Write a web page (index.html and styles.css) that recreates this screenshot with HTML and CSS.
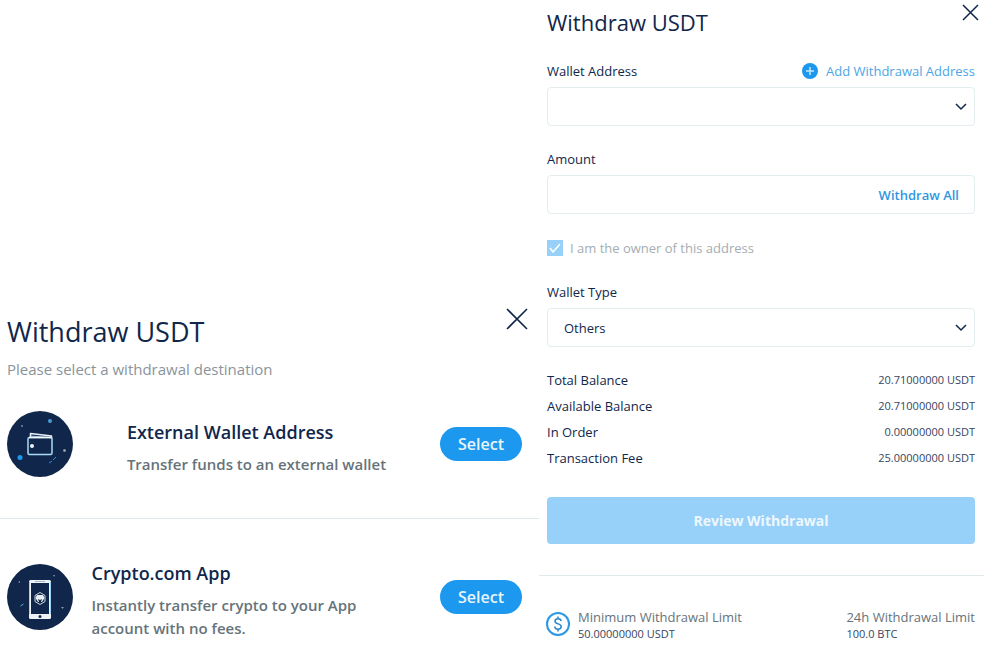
FILE: index.html
```html
<!DOCTYPE html>
<html lang="en">
<head>
<meta charset="utf-8">
<title>Withdraw USDT</title>
<link rel="stylesheet" href="styles.css">
</head>
<body>
<main class="layout">
  <section class="destinations">
    <header class="dest-header">
      <div>
        <h1 class="dest-title">Withdraw USDT</h1>
        <p class="dest-subtitle">Please select a withdrawal destination</p>
      </div>
      <button class="close" type="button" aria-label="Close">
        <svg width="22" height="22" viewBox="0 0 22 22"><path d="M1 1 21 21M21 1 1 21" fill="none" stroke="#10274b" stroke-width="1.600"/></svg>
      </button>
    </header>

    <article class="option">
      <svg class="option-icon" viewBox="0 0 66 66" aria-hidden="true">
        <circle cx="33" cy="33" r="33" fill="#10274b"/>
        <g fill="none" stroke-linejoin="round">
          <path d="M23.500 26v-3.500L44.500 25v3" stroke="#e8f2f8" stroke-width="1.500"/>
          <path d="M24 25 43 26.500" stroke="#9fb6c9"/>
          <rect x="21" y="26.500" width="24" height="17" rx="1.500" stroke="#a9daf8" stroke-width="1.500"/>
          <path d="M22 26.500h22" stroke="#f4f8fa" stroke-width="1.500"/>
          <path d="m42 52 3-2m1-1 3-3" stroke="#1c98ee"/>
        </g>
        <circle cx="25" cy="35" r="2" fill="#eef3f5"/>
        <circle cx="43" cy="10" r="2" fill="#4c9bd9"/>
        <circle cx="13" cy="46.500" r="2.500" fill="#1c98ee"/>
        <circle cx="15" cy="15" r="1" fill="#7f8da0"/>
        <circle cx="57.500" cy="39.500" r="1.300" fill="#aab7c2"/>
      </svg>
      <div class="option-text">
        <h2>External Wallet Address</h2>
        <p>Transfer funds to an external wallet</p>
      </div>
      <button class="select-button" type="button">Select</button>
    </article>

    <article class="option">
      <svg class="option-icon" viewBox="0 0 66 66" aria-hidden="true">
        <circle cx="33" cy="33" r="33" fill="#10274b"/>
        <rect x="22" y="16" width="22" height="39" rx="1.500" fill="#eef4f6"/>
        <path d="M22.500 18v32M43.500 18v32" stroke="#9bd2f8" fill="none"/>
        <rect x="24" y="19" width="18" height="31" fill="#10274b"/>
        <path d="M28 17.500h10" stroke="#a9b6c0"/>
        <circle cx="33" cy="52.500" r="1.500" fill="#10274b"/>
        <path d="m33 28.500 5 3v6l-5 3-5-3v-6z" fill="none" stroke="#cfd9df"/>
        <path d="M30 31h6l1.500 3-2.500 4h-4l-2.500-4z" fill="#e9eff2"/>
        <path d="m31 35 2 1 2-1-1 3h-2z" fill="#10274b"/>
        <path d="m13.500 42 3-2" stroke="#4eaff2"/>
        <path d="m11 18 2-1v2zM46 11h2l-1 2zM54 43h3l-1.500 2z" fill="#8795a6"/>
      </svg>
      <div class="option-text option-text-long">
        <h2>Crypto.com App</h2>
        <p>Instantly transfer crypto to your App account with no fees.</p>
      </div>
      <button class="select-button" type="button">Select</button>
    </article>
  </section>

  <section class="withdraw">
    <form class="form">
      <header class="form-header">
        <h1 class="form-title">Withdraw USDT</h1>
        <button class="close" type="button" aria-label="Close">
          <svg width="17" height="17" viewBox="0 0 17 17"><path d="m1 1 15 15M16 1 1 16" fill="none" stroke="#10274b" stroke-width="1.500"/></svg>
        </button>
      </header>

      <div class="field">
        <div class="label-row">
          <label for="address">Wallet Address</label>
          <a class="add-link" href="#">
            <svg width="16" height="16" viewBox="0 0 16 16" aria-hidden="true"><circle cx="8" cy="8" r="8" fill="#1c98ee"/><path d="M8 4v8M4 8h8" stroke="#c9e6fb" stroke-width="1.500"/></svg>
            Add Withdrawal Address
          </a>
        </div>
        <div class="control">
          <select id="address"><option></option></select>
          <svg class="chevron" viewBox="0 0 12 8" aria-hidden="true"><path d="m1 1 5 5 5-5" fill="none" stroke="#10274b" stroke-width="1.500"/></svg>
        </div>
      </div>

      <div class="field">
        <label for="amount">Amount</label>
        <div class="control">
          <input id="amount" class="amount" type="text">
          <button class="all-button" type="button">Withdraw All</button>
        </div>
      </div>

      <label class="owner">
        <span class="tick">
          <input type="checkbox" checked disabled>
          <svg viewBox="0 0 16 16" aria-hidden="true"><path d="m3 8 3 4 7-8" fill="none" stroke="#fff" stroke-width="1.500"/></svg>
        </span>
        I am the owner of this address
      </label>

      <div class="field">
        <label for="type">Wallet Type</label>
        <div class="control">
          <select id="type"><option>Others</option></select>
          <svg class="chevron" viewBox="0 0 12 8" aria-hidden="true"><path d="m1 1 5 5 5-5" fill="none" stroke="#10274b" stroke-width="1.500"/></svg>
        </div>
      </div>

      <table class="balances">
        <tr><th scope="row">Total Balance</th><td>20.71000000 USDT</td></tr>
        <tr><th scope="row">Available Balance</th><td>20.71000000 USDT</td></tr>
        <tr><th scope="row">In Order</th><td>0.00000000 USDT</td></tr>
        <tr><th scope="row">Transaction Fee</th><td>25.00000000 USDT</td></tr>
      </table>

      <button class="review" type="submit" disabled>Review Withdrawal</button>
    </form>

    <footer class="limits">
      <svg class="limit-icon" viewBox="0 0 24 24" aria-hidden="true">
        <circle cx="12" cy="12" r="11" fill="none" stroke="#2b98e6" stroke-width="2"/>
        <path d="M15 9c0-1.500-1.200-2.300-3-2.300S9 7.500 9 9.200c0 3.600 6.200 1.800 6.200 5.400 0 1.700-1.400 2.600-3.200 2.600s-3.200-.9-3.200-2.600M12 4.500v2.500M12 17v2.500" fill="none" stroke="#2587cf" stroke-width="1.500"/>
      </svg>
      <div>
        <p class="limit-label">Minimum Withdrawal Limit</p>
        <p class="limit-value">50.00000000 USDT</p>
      </div>
      <div class="limit-end">
        <p class="limit-label">24h Withdrawal Limit</p>
        <p class="limit-value">100.0 BTC</p>
      </div>
    </footer>
  </section>
</main>
</body>
</html>
```
FILE: styles.css
```css
* {
  box-sizing: border-box;
}

body {
  margin: 0;
  background: #fff;
  color: #10274b;
  font-family: "Open Sans", "Noto Sans", sans-serif;
  font-size: 13px;
  line-height: 20px;
}

h1, h2, p {
  margin: 0;
}

button, input, select {
  font: inherit;
  color: inherit;
}

button {
  border: 0;
  padding: 0;
  background: none;
}

svg {
  display: block;
}

.layout {
  display: grid;
  grid-template-columns: 539fr 451fr;
  min-height: 100vh;
}

/* Destination list */
.destinations {
  display: flex;
  flex-direction: column;
  justify-content: flex-end;
}

.dest-header {
  display: flex;
  justify-content: space-between;
  align-items: flex-start;
  padding: 0 11px 0 7px;
}

.dest-header .close {
  margin-top: -6px;
}

.dest-title {
  font-size: 27px;
  line-height: 36px;
  font-weight: 400;
}

.dest-subtitle {
  margin-top: 7px;
  color: #8a949b;
  font-size: 15px;
  line-height: 24px;
}

.option {
  display: flex;
  align-items: center;
  padding: 30px 17px 41px 7px;
}

.option + .option {
  border-top: 1px solid #dfeaec;
  padding-top: 34px;
  padding-bottom: 10px;
}

.option-icon {
  flex: none;
  width: 66px;
  height: 66px;
}

.option-text {
  max-width: 330px;
  margin: 0 auto;
  padding-top: 8px;
  font-weight: 600;
}

.option-text-long {
  padding-right: 24px;
}

.option-text h2 {
  margin-bottom: 9px;
  font-size: 18px;
  line-height: 24px;
  font-weight: 600;
}

.option-text p {
  color: #67737a;
  font-size: 15px;
  line-height: 23px;
}

.select-button {
  flex: none;
  width: 82px;
  height: 34px;
  border-radius: 17px;
  background: #1c98ee;
  color: #e9f5fd;
  font-size: 16px;
  font-weight: 600;
}

/* Withdrawal form */
.withdraw {
  padding-top: 7px;
}

.form {
  display: flex;
  flex-direction: column;
  gap: 23px;
  padding: 0 15px 31px 8px;
}

.form-header {
  display: flex;
  justify-content: space-between;
  align-items: flex-start;
  margin-right: -4px;
}

.form-header .close {
  margin-top: -3px;
}

.form-title {
  font-size: 22px;
  line-height: 31px;
  font-weight: 400;
}

.field {
  display: flex;
  flex-direction: column;
  gap: 6px;
}

.label-row {
  display: flex;
  justify-content: space-between;
}

.add-link {
  display: flex;
  align-items: center;
  gap: 8px;
  color: #4ba6e6;
  text-decoration: none;
}

.control {
  display: flex;
  position: relative;
  border: 1px solid #e3ecef;
  border-radius: 4px;
}

.control select,
.amount {
  flex: 1;
  min-width: 0;
  height: 37px;
  border: 0;
  padding: 0 16px;
  background: none;
  appearance: none;
  outline: 0;
}

.chevron {
  position: absolute;
  top: 15px;
  right: 7px;
  width: 12px;
  height: 8px;
  pointer-events: none;
}

.all-button {
  padding: 0 15px;
  color: #2f97e0;
  font-weight: 600;
}

.owner {
  display: flex;
  align-items: center;
  gap: 7px;
  padding: 1px 0;
  color: #a4adb3;
}

.tick {
  display: grid;
}

.tick > * {
  grid-area: 1 / 1;
  width: 16px;
  height: 16px;
  margin: 0;
}

.tick input {
  appearance: none;
  background: #97d1fa;
}

.tick svg {
  z-index: 1;
}

.balances {
  width: 100%;
  margin: -3px 0 3px;
  border-collapse: collapse;
}

.balances th,
.balances td {
  height: 26px;
  padding: 0;
  font-weight: 400;
  text-align: left;
}

.balances td {
  color: #35465f;
  font-size: 11px;
  text-align: right;
}

.review {
  height: 47px;
  border-radius: 4px;
  background: #97d1fa;
  color: #eef7fd;
  font-size: 14px;
  font-weight: 700;
}

.limits {
  display: flex;
  align-items: center;
  gap: 8px;
  margin-right: 6px;
  border-top: 1px solid #dfeaec;
  padding: 31px 9px 8px 7px;
}

.limit-icon {
  flex: none;
  width: 24px;
  height: 24px;
}

.limit-end {
  margin-left: auto;
}

.limit-label {
  color: #67737a;
}

.limit-value {
  color: #35465f;
  font-size: 11px;
  line-height: 14px;
}
```
